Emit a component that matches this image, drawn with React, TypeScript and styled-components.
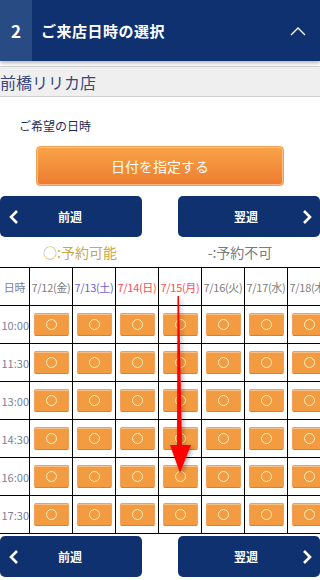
import React from 'react';
import styled, { createGlobalStyle } from 'styled-components';

const GlobalStyle = createGlobalStyle`
	body {
		margin: 0;
		background: #fff;
		font-family: 'Noto Sans CJK JP', 'Noto Sans', sans-serif;
	}
`;

const Page = styled.div`
	width: 320px;
	overflow: hidden;
`;

const StepHeader = styled.div`
	display: flex;
	align-items: center;
	height: 61px;
	background: #0f3170;
	color: #fff;
	box-shadow: 0 2px 4px rgba(0, 0, 0, 0.3);
	position: relative;
	z-index: 1;
`;

const StepNum = styled.div`
	width: 32px;
	align-self: stretch;
	display: flex;
	align-items: center;
	justify-content: center;
	background: #284b83;
	font-size: 17px;
	font-weight: bold;
`;

const StepTitle = styled.div`
	flex: 1;
	padding-left: 9px;
	font-size: 15px;
	font-weight: bold;
	letter-spacing: 0.5px;
`;

const Toggle = styled.div`
	width: 36px;
	display: flex;
	justify-content: center;
	margin-right: 4px;
`;

const ShopBar = styled.div`
	margin-top: 5px;
	height: 29px;
	display: flex;
	align-items: center;
	background: #efefef;
	border-top: 1px solid #cfcfcf;
	border-bottom: 1px solid #cfcfcf;
	color: #38477d;
	font-size: 16px;
`;

const Label = styled.div`
	padding: 20px 0 0 19px;
	font-size: 12px;
	color: #1c2b5c;
	height: 18px;
	line-height: 18px;
`;

const DateButton = styled.div`
	margin: 11px auto 0;
	width: 248px;
	height: 40px;
	box-sizing: border-box;
	border-radius: 4px;
	border: 1px solid #f0a050;
	background: linear-gradient(#f8a449, #ee7b30);
	box-shadow: inset 0 0 0 1px rgba(255, 220, 180, 0.6);
	color: #fff;
	font-size: 14px;
	display: flex;
	align-items: center;
	justify-content: center;
`;

const WeekNav = styled.div<{ $top: number }>`
	display: flex;
	justify-content: space-between;
	margin-top: ${p => p.$top}px;
`;

const WeekButton = styled.div<{ $dir: 'prev' | 'next' }>`
	width: 142px;
	height: 41px;
	box-sizing: border-box;
	border-radius: 5px;
	background: #10316f;
	color: #fff;
	font-size: 12px;
	font-weight: bold;
	display: flex;
	align-items: center;
	position: relative;
	padding-left: ${p => (p.$dir === 'prev' ? '58px' : '56px')};

	svg {
		position: absolute;
		top: 13px;
		${p => (p.$dir === 'prev' ? 'left: 7px;' : 'right: 6px;')}
	}
`;

const Legend = styled.div`
	display: flex;
	height: 30px;
	align-items: center;
	font-size: 14px;
`;

const LegendItem = styled.div<{ $color: string }>`
	flex: 1;
	text-align: center;
	color: ${p => p.$color};
`;

const TableWrap = styled.div`
	position: relative;
	width: 320px;
	overflow: hidden;
`;

const Table = styled.table`
	border-collapse: collapse;
	table-layout: fixed;
	width: 331px;
	border-top: 1px solid #000;
	border-bottom: 1px solid #000;
`;

const HeadCell = styled.th<{ $color: string; $w: number }>`
	width: ${p => p.$w}px;
	height: 37px;
	padding: 0;
	border-right: 1px solid #000;
	border-bottom: 1px solid #000;
	font-size: 11px;
	font-weight: normal;
	color: ${p => p.$color};
	white-space: nowrap;
	overflow: hidden;
	letter-spacing: -0.3px;
`;

const TimeCell = styled.td`
	height: 37px;
	padding: 0;
	border-right: 1px solid #000;
	border-bottom: 1px solid #000;
	font-size: 11px;
	color: #7a7f9c;
	text-align: right;
	white-space: nowrap;
	overflow: hidden;
`;

const SlotCell = styled.td`
	padding: 0;
	border-right: 1px solid #000;
	border-bottom: 1px solid #000;
	text-align: center;
	vertical-align: middle;
`;

const Slot = styled.div`
	width: 35px;
	height: 23px;
	margin: 0 auto;
	box-sizing: border-box;
	border-radius: 2px;
	border: 1px solid #f0a060;
	border-bottom-color: #e8782e;
	background: #f39b41;
	box-shadow: inset 0 1px 0 #f8c08a;
	display: flex;
	align-items: center;
	justify-content: center;
`;

const Ring = styled.span`
	width: 11px;
	height: 11px;
	box-sizing: border-box;
	border: 1.3px solid #fff2bd;
	border-radius: 50%;
`;

const Arrow = styled.svg`
	position: absolute;
	left: 0;
	top: 0;
	pointer-events: none;
`;

const days = [
	{ label: '7/12(金)', color: '#7c7c7c' },
	{ label: '7/13(土)', color: '#6a5fe0' },
	{ label: '7/14(日)', color: '#ff4d4d' },
	{ label: '7/15(月)', color: '#ff4d4d' },
	{ label: '7/16(火)', color: '#7c7c7c' },
	{ label: '7/17(水)', color: '#7c7c7c' },
	{ label: '7/18(木)', color: '#7c7c7c' },
];

const times = ['10:00', '11:30', '13:00', '14:30', '16:00', '17:30'];

const ChevronLeft = () => (
	<svg width="14" height="16" viewBox="0 0 14 16">
		<path d="M10 2 L4 8 L10 14" stroke="#fff" strokeWidth="2.6" fill="none" />
	</svg>
);

const ChevronRight = () => (
	<svg width="14" height="16" viewBox="0 0 14 16">
		<path d="M4 2 L10 8 L4 14" stroke="#fff" strokeWidth="2.6" fill="none" />
	</svg>
);

const WeekButtons: React.FC<{ top: number }> = ({ top }) => (
	<WeekNav $top={top}>
		<WeekButton $dir="prev">
			<ChevronLeft />
			前週
		</WeekButton>
		<WeekButton $dir="next">
			翌週
			<ChevronRight />
		</WeekButton>
	</WeekNav>
);

const App: React.FC = () => {
	return (
		<>
			<GlobalStyle />
			<Page>
				<StepHeader>
					<StepNum>2</StepNum>
					<StepTitle>ご来店日時の選択</StepTitle>
					<Toggle>
						<svg width="16" height="10" viewBox="0 0 16 10">
							<path d="M1 9 L8 2 L15 9" stroke="#fff" strokeWidth="1.4" fill="none" />
						</svg>
					</Toggle>
				</StepHeader>
				<ShopBar>前橋リリカ店</ShopBar>
				<Label>ご希望の日時</Label>
				<DateButton>日付を指定する</DateButton>
				<WeekButtons top={10} />
				<Legend>
					<LegendItem $color="#c9a74a">○:予約可能</LegendItem>
					<LegendItem $color="#7a7a7a">-:予約不可</LegendItem>
				</Legend>
				<TableWrap>
					<Table>
						<thead>
							<tr>
								<HeadCell $w={29} $color="#7a7f9c">日時</HeadCell>
								{days.map(d => (
									<HeadCell key={d.label} $w={42} $color={d.color}>
										{d.label}
									</HeadCell>
								))}
							</tr>
						</thead>
						<tbody>
							{times.map(t => (
								<tr key={t}>
									<TimeCell>{t}</TimeCell>
									{days.map(d => (
										<SlotCell key={d.label}>
											<Slot>
												<Ring />
											</Slot>
										</SlotCell>
									))}
								</tr>
							))}
						</tbody>
					</Table>
					<Arrow width="320" height="270" viewBox="0 0 320 270">
						<defs>
							<filter id="sh" x="-50%" y="-10%" width="200%" height="120%">
								<feDropShadow dx="2" dy="2" stdDeviation="2" floodColor="#000" floodOpacity="0.3" />
							</filter>
						</defs>
						<path
							d="M177.5 29 L179 29 L182 178 L191 178 L180 206 L170 178 L177 178 Z"
							fill="#ff0000"
							filter="url(#sh)"
						/>
					</Arrow>
				</TableWrap>
				<WeekButtons top={2} />
			</Page>
		</>
	);
};

export default App;
